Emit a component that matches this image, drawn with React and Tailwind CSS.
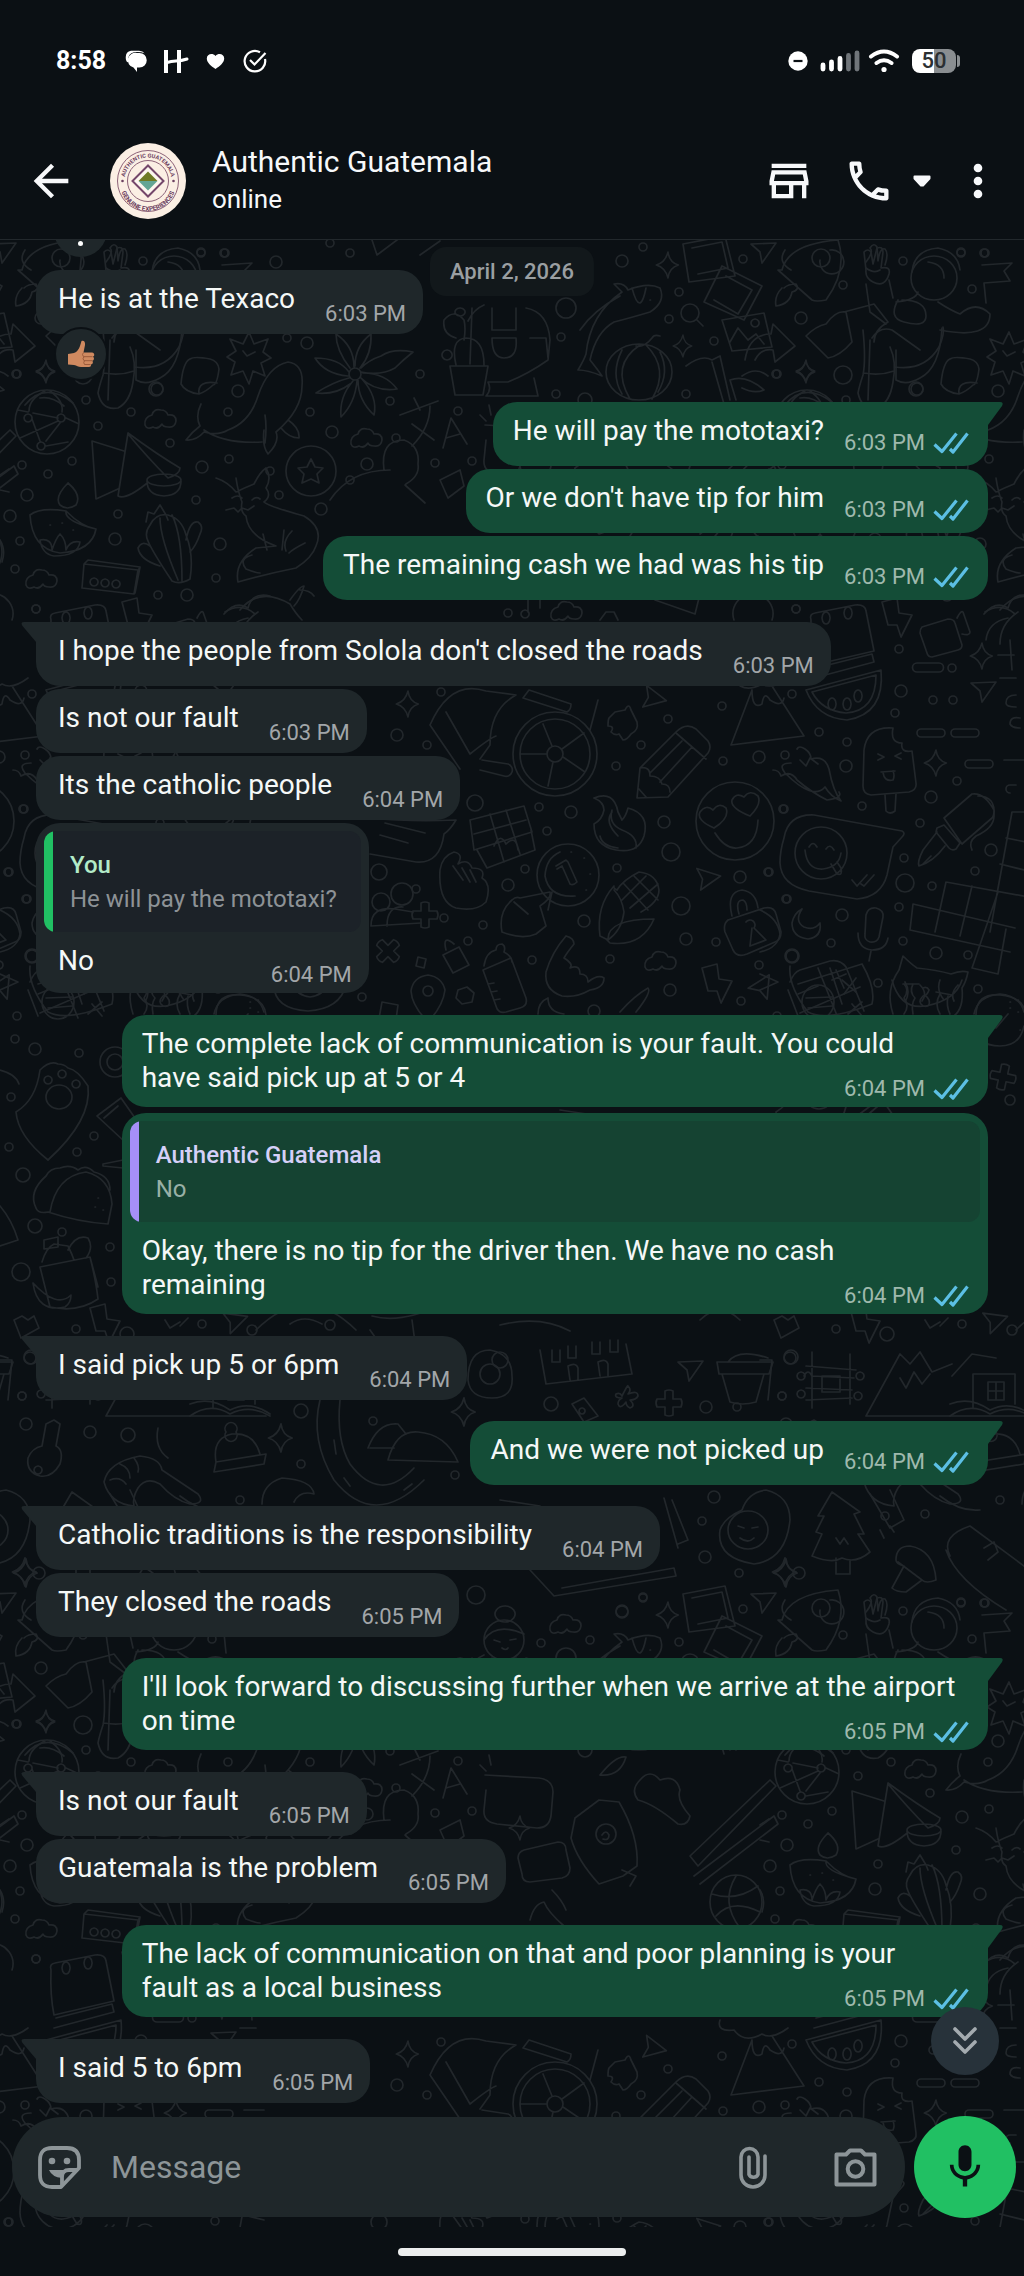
import React from "react";
import {
  MdArrowBack,
  MdOutlineStore,
  MdOutlineLocalPhone,
  MdMoreVert,
  MdMic,
} from "react-icons/md";

/* ---------- wallpaper ---------- */

const BUBBLES = [
  [201, 253, 4], [225, 253, 4], [276, 262, 6], [350, 253, 4], [143, 261, 4], [330, 243, 4],
  [17, 374, 4], [157, 389, 6], [238, 391, 6], [86, 400, 4], [131, 412, 4], [98, 426, 4],
  [228, 412, 4], [310, 412, 4], [332, 432, 6], [287, 338, 4], [307, 343, 6], [420, 374, 4],
  [390, 401, 4], [458, 411, 4], [396, 438, 4], [170, 443, 4], [72, 461, 4], [22, 465, 4],
  [48, 474, 4], [202, 467, 6], [229, 459, 4], [270, 471, 4], [367, 464, 6], [435, 463, 4],
  [472, 461, 4], [350, 480, 4], [27, 495, 6], [279, 495, 4], [196, 500, 4], [321, 509, 6],
  [118, 514, 4], [10, 516, 6], [115, 539, 6], [20, 541, 4], [220, 544, 6], [15, 569, 4],
  [216, 578, 4], [158, 595, 4], [187, 595, 6], [36, 609, 4], [622, 261, 6], [643, 247, 4],
  [679, 292, 4], [566, 308, 10], [669, 319, 4], [561, 337, 4], [714, 341, 4], [743, 259, 4],
  [801, 318, 6], [843, 285, 4], [556, 394, 4], [585, 400, 7], [686, 394, 4], [776, 374, 4],
  [843, 375, 9], [916, 389, 7], [961, 252, 4], [984, 253, 4], [972, 289, 4], [508, 613, 4],
  [796, 609, 4], [899, 649, 4], [952, 668, 4], [901, 691, 6], [933, 700, 4], [953, 700, 4],
  [792, 694, 4], [722, 706, 4], [895, 713, 4], [668, 719, 4], [819, 732, 4], [847, 742, 4],
  [397, 735, 6], [427, 745, 4], [641, 745, 4], [616, 766, 4], [723, 761, 4], [759, 757, 6],
  [785, 755, 4], [846, 766, 6], [441, 692, 4], [957, 781, 4], [931, 797, 6], [920, 823, 4],
  [539, 807, 4], [571, 812, 6], [664, 822, 6], [547, 831, 4], [783, 809, 4], [862, 806, 4],
  [475, 803, 8], [671, 852, 9], [617, 868, 4], [525, 869, 4], [508, 885, 6], [740, 877, 6],
  [768, 872, 4], [904, 858, 4], [905, 883, 9], [932, 886, 4], [975, 871, 4], [991, 850, 6],
  [584, 921, 6], [681, 906, 9], [786, 899, 4], [842, 915, 6], [899, 907, 4], [686, 939, 6],
  [716, 942, 4], [831, 943, 4], [903, 941, 4], [936, 953, 6], [968, 955, 4], [610, 959, 4],
  [532, 960, 4], [792, 956, 6], [759, 965, 4], [670, 990, 6], [741, 1001, 4], [594, 1011, 6],
  [878, 983, 4], [978, 989, 4], [379, 872, 8], [416, 889, 4], [444, 918, 4], [468, 941, 4],
  [483, 925, 4], [362, 997, 4], [24, 809, 4], [9, 872, 4], [27, 899, 4], [32, 956, 7],
  [17, 1016, 4], [15, 1039, 4], [35, 1049, 6], [79, 1053, 4], [11, 1097, 4], [94, 1136, 4],
  [9, 1147, 4], [77, 1152, 4], [23, 1175, 7], [35, 1226, 7], [62, 1232, 4], [110, 1247, 4],
  [21, 1272, 9], [111, 1282, 4], [76, 1329, 4], [202, 1324, 4], [127, 1334, 7], [30, 1358, 6],
  [22, 1396, 4], [301, 1411, 7], [90, 1432, 6], [128, 1435, 7], [26, 1424, 6], [301, 1464, 4],
  [240, 1500, 4], [373, 1421, 4], [455, 1475, 4], [551, 1404, 7], [706, 1407, 6], [737, 1407, 4],
  [782, 1396, 4], [791, 1357, 7], [714, 1497, 6], [702, 1521, 4], [705, 1557, 6], [739, 1573, 4],
  [799, 1573, 6], [885, 1516, 4], [925, 1514, 4], [476, 1595, 9], [622, 1612, 6], [643, 1598, 4],
  [590, 1640, 4], [541, 1643, 4], [500, 1360, 8], [1010, 1100, 5], [1012, 1330, 5], [330, 1325, 5],
];

const SPARKLES = [
  [668, 265, 13], [46, 371, 11], [683, 346, 11], [806, 372, 11], [982, 656, 13], [408, 704, 13],
  [936, 763, 13], [281, 1438, 14], [464, 1412, 14], [785, 1572, 14], [26, 1573, 14],
  [520, 478, 12],
];

const CLOUDS = [[161, 420], [367, 439], [42, 580], [661, 962], [567, 612], [566, 1625]];
const CURSORS = [[763, 253, 0], [650, 700, 40], [705, 881, 20], [763, 990, -30], [983, 692, 0], [690, 1371, 0], [233, 1324, 10]];
const BOLTS = [[897, 617], [717, 983], [105, 1323]];
const PLUSES = [[425, 915, 0], [388, 951, 45], [1003, 1077, 12], [669, 1403, 0]];

const DOODLES = [
  // globe
  "M15 422a32 32 0 1 0 64 0a32 32 0 1 0-64 0M28 414a4 4 0 1 0 .1 0M61 414a4 4 0 1 0 .1 0M41 442a4 4 0 1 0 .1 0M18 410l10 2M33 413l25 5M20 438l38-17M32 419l8 22M46 441l14-18M45 391q-16 8-16 20M50 391q14 10 12 21M66 418l13 6M46 446l22-4",
  // whale
  "M201 404q-6 12-1 22q-8 6-14 14q10 1 18-8q14 4 24-2q22-8 30-34q10-30 30-34q16 2 14 24q0 24-26 46q4 10-8 22q-6-8-4-24M204 430q20 14 58 12M265 415q2 12 0 28M288 420q12 8 11 18q-10 0-18-10",
  // flower
  "M349 374a6 6 0 1 0 12 0a6 6 0 1 0-12 0M350 368q-14-18-14-34q18 12 18 33M360 368q12-14 11-34q-16 12-16 32M361 372q20 4 34-4q8-8 18-16q-20-4-32 4q-12 4-20 12M361 378q14 14 36 11q-12-16-34-16M358 380q0 20 16 35q4-18-12-36M353 381q-14 16-12 36q14-14 16-36M349 378q-16 4-33 15q20 2 34-9M349 372q-10-14-34-14q10 16 33 18",
  // starburst
  "M249 332l5 12l14-5l-5 13l8 6l-10 5l4 13l-12-5l-4 13l-6-13l-12 4l4-13l-8-5l9-6l-6-12l13 5zM243 351l4 5l8-4",
  // sock and jug
  "M103 330q3 30 0 45q-4 12-5 18q4 18 20 15q12-6 15-26q4-20-3-35M104 373q16 3 30-2M135 367q30 4 44-20q6-14 4-20",
  // sticker
  "M190 359q4-3 20 0q8 2 9 10q-2 16-6 16q-6 6-14 9q-14-2-18-10q2-22 9-25M199 394q-2-14 18-11",
  // astronaut above
  "M25 250q-8 12 6 20M60 260a12 12 0 1 0 10-10M106 262q8-10 4-14q4-6 7-1l1 14q2-14 7-12q4 4 0 16M120 270q-6 4-14-2",
  "M152 272q2-22 26-24q20 4 22 22M372 240l5 15l24-18M420 255l20-14",
  // folded napkin with bowl
  "M92 441l32 10M92 441l4 58l22-10M128 433l-10 63q8 4 28-12M128 433q30 22 52 35q0 6-12 10q-20-20-40-44M147 480a17 6 0 1 0 34 0a17 6 0 1 0-34 0M147 481q0 14 17 15q17-1 17-15",
  // oil lamp
  "M68 483q-14 14-8 22q7 6 16 0q6-10-8-22M30 515q10-8 36-4q16 16 30 18q-4 22-36 24q-28-4-30-38M66 511q-2 10 30 18M40 540q12-2 12 10q4-12 8-16q6 6 6 16q4-10 14-8q-2 14-26 14q-12-2-14-16M50 525h.5M62 523h.5M73 530h.5",
  // cactus
  "M150 525q6-12 18-10q14 4 18 20q8 20 4 44q-10 6-18 2q-20-30-24-40q-4-8 2-16M160 518q0 20 18 62M172 515q10 20 10 66M146 522l2-10l6 2l6-9l6 10l2 5M186 540q4-20 12-18q6 4 2 12q-4 12-10 18M160 566q-20-6-22-18q4-8 12-2",
  // fox
  "M216 478q12 4 20 14q8-4 18-8q6-12 12-16q6 10 0 20q6 8-2 14q4 4 40 14q20 12 12 30q-4 12-20 22q-30 6-58 14q-4-20 18-34l20-2q-28-10-30-30q-6-4-4-14q-4-10-6-24M232 498q6-4 10 0M252 500q4-4 8-1M226 510l8-2l4 4l4-4l6 2l6-4M263 534l4 16M284 530l-2 20M292 531q-10 10-6 20M305 543q-12 6-16 10M252 555q-14 4-6 14q10 4 14 4",
  // star badge
  "M286 471a25 25 0 1 0 50 0a25 25 0 1 0-50 0M311 459l4 8l8 1l-6 6l2 9l-8-4l-9 4l2-9l-6-6l9-1z",
  // box with three dots
  "M84 564l54 6l-4 24l-52-6zM84 564l4-4l52 7l-2 4M140 567l-5 26M94 578a4 4 0 1 0 .1 0M105 579a4 4 0 1 0 .1 0M116 580a4 4 0 1 0 .1 0",
  // translate
  "M400 415l38-14M414 398l6 12M430 406q0 22-18 40M412 424l22 16M443 448l8-30l16 26M446 438l14-4",
  // calendar
  "M51 620q-2-6 4-7l40-8q10-1 11 6l8 40l-60 14q-4-20-3-45M66 612a4 6 0 1 0 .1 0M88 607a4 6 0 1 0 .1 0M56 668l56-14l2 8l-60 16",
  // gardener with potted cactus
  "M450 366h38l-5 29h-28zM456 365q-6-26 10-27q18 0 18 27M456 338q-14-4-12-18q10-12 20 0q2 8 0 20M460 308a5 4 0 1 0 .1 0M447 350a5 5 0 1 0 .1 0M484 305q-10 4-16 16M472 308l-2 56M492 308v22h24v-22M492 338h24q2 20-12 20q-12 0-12-20M526 308q22 4 24 32l-2 20q-20 14-40 22l-20 0q4 8-2 14h52l-4-18M530 338h16l2 20",
  // koi
  "M614 284q10-2 14 6q20-8 32-2q6 14-10 24q-20 6-36 10q-18 10-24 38q8 10 12 16q-14-6-24-6q6-10 8-16q4-40 36-62zM632 288q8 30 14 0M580 330q14-20 40-34M650 300h.5",
  // pumpkin
  "M606 372a33 28 0 1 0 66 0a33 28 0 1 0-66 0M640 345q-30 20-10 54M646 345q24 24 6 54M622 350q-12 24 0 44M660 352q10 20-2 40M636 346q8 2 16-8q2-4 8-2",
  // photo frames
  "M683 244l42-8l10 40l-46 6zM692 248l30-6l6 26l-30 6M722 266l40 20l-18 34l-40-18zM726 276l26 14l-14 24l-24-14",
  "M722 320l42-7l8 34l-40 4zM730 342l8-14l10 12l8-6l8 10M755 319a4 4 0 1 0 .1 0M745 360q4-26 26-26l2-10l22 22l-20 16l-2-12q-12-2-18 10",
  "M681 313a9 9 0 1 0 18 0a9 9 0 1 0-18 0M697 320l6 6",
  // rocket
  "M782 270q6-26 56-30q10 30-12 60q-10 2-14 0l-34-30zM812 258a9 9 0 1 0 18 0a9 9 0 1 0-18 0M782 288q-8 8-6 18q14-2 16-14q8-2 4-8q-8 0-12 4",
  // astronaut
  "M911 278a23 22 0 1 0 46 0a23 22 0 1 0-46 0M928 262q16 2 16 16M866 270l-2-18q4-4 7 0l2 12l4-16q6-2 6 4l-2 16q10-2 8 6q-4 14-16 8q-8-4-7-12M866 284l4 28l16 12M889 280l4 18M844 312l30-8l14 18q-14 8-14 20M806 336q10-10 20-12q10-14 20-12l6 30q-12 14-24 16zM872 338q8-12 20-8l28 20M870 340l-2 60M896 350v30q10 6 24-2q20-10 22-50M896 302q20-2 22-10M898 300q-10 18 6 22q22 6 22-6q0-16-24-16M940 330q50 10 50-16q-14-14-30 0q-10-4-22-12",
  "M982 265l30-2l-8 8l6 10l-26 2M984 283l2 20",
  // bamboo
  "M686 366q16-12 26-6l8-4l10 44M712 362l12 42M736 400l-6-20q16-6 34 10q-10 4-22-2M742 376q14-10 26 0",
  // ball
  "M785 405q20-24 48-2M800 398q12-2 24 8",
  // camcorder
  "M922 627l26-8q6 0 7 4l7 22q0 4-4 5l-26 7q-4 0-5-4l-7-20q0-4 2-6zM957 618q4-8 6-6l7 20q0 4-8 2",
  // palm tree
  "M984 614q12-14 24-6q4-16 22-12M986 640q2-18 22-22M1000 644q0-20 18-32M1010 640l2 30M998 655h16M1000 678h16",
  // watermelon
  "M806 690l75-20q4 44-34 50q-30-2-41-30M812 692l64-17q0 36-30 38q-24-2-34-21M832 698a4 6 0 1 0 .1 0M847 698a4 6 0 1 0 .1 0M858 690a4 6 0 1 0 .1 0",
  // volcano
  "M752 690l-21 55l73-9l-32-50M752 690q0 20 10 14q2-14 8-4q12 8 14-2M720 670q-4 12 14 10q10 14 28 4q10 6 26-6",
  // popsicle
  "M893 728q-26-2-29 22l-1 36q0 8 8 9l38-3q8-2 7-9l-4-32q-12 2-10-8q-12 0-9-15M878 754l6 3l-6 3M901 753l-6 3l6 3M881 772l14-1M883 772q1 10 10 8q2-4 0-9M885 795l1 16q4 4 9 0l1-17",
  // pills
  "M921 729h20a4 4 0 1 1 0 8h-20a4 4 0 1 1 0-8M955 729h20a4 4 0 1 1 0 8h-20a4 4 0 1 1 0-8M969 760h20a4 4 0 1 1 0 8h-20a4 4 0 1 1 0-8M1004 760h20M917 663h22a4 4 0 1 1 0 9h-22a4 4 0 1 1 0-9M1016 785h-6a4 4 0 1 0 0 8M1016 695q-10 0-10 8q0 4 10 4M1020 718q-10-2-10 6q2 4 10 4",
  // wheelchair wheel
  "M513 754a42 42 0 1 0 84 0a42 42 0 1 0-84 0M520 754a35 35 0 1 0 70 0a35 35 0 1 0-70 0M547 754a8 8 0 1 0 16 0a8 8 0 1 0-16 0M552 746l-9-22M562 749l22-16M563 757l22 15M553 762l-5 24M547 754h-26M523 698l44 14q4-2 4-8l-42-14zM590 730l8-30M430 725q20-46 56-34l30 4q-26 14-26 50l-10 14M430 725l30 44M446 712l24 42q20-16 26-18M480 770l24 6a6 6 0 1 0 4-12l-26-4",
  // puzzle
  "M609 718q4-4 6-6l10-2q4-8 6 0l6 12q2 8-6 12q-4 6-8 6l-4-6q-4 2-8-2q4-6-3-6q0-6 1-8",
  // pencil
  "M637 798l3-30l36-36q10-10 20-3l12 12q4 6 0 12l-40 44zM640 768q10-2 10 8q10 0 12 8q8 0 8 8M676 733l30 26M682 741l-32 32M692 747l-32 35M638 788l8 9",
  // chilli peppers
  "M797 749q2-4 8 0q6 4 6 10q14-4 18 10q4 22 12 32q-10-4-16-14q-12 14-40-14q-8-10 6-10M773 770q6 0 8 6M781 776q10-6 16 4q14 12 30 20q16-2 12-8M800 760l6 6l4-8l8 6",
  // heart eyes face
  "M696 821a39 39 0 1 0 78 0a39 39 0 1 0-78 0M715 833q10 16 22 15q20-2 21-28M714 828q-18-8-14-16q6-8 13-2q6-8 13-2q4 10-12 20M750 816q-20-8-18-16q4-8 12-3q6-8 14-1q4 8-8 20",
  // chat bubble with smiley
  "M784 838q4-24 30-23l88 16q4 2 0 6l-9 10l-6 28q-6 22-30 24l-48-8q-28-6-29-28q0-12 4-25M795 853a26 26 0 1 0 52 0a26 26 0 1 0-52 0M805 850q2 20 18 19q16-2 18-16M809 847q4-7 8 0M826 849q4-6 8 1M831 864l6 10q6 2 4-6l-4-6M852 880l5 6l10-11M861 884l3 2l10-11",
  // fountain pen
  "M944 818l28-24q12-2 22 16q0 6-2 8l-30 26zM937 828l7-3l16 18l-4 6q-4 2-7-1l-13-16zM937 832l-14 18q-6 12-4 16q14-4 26-20M923 864l8-8M978 796q18 0 16 20q0 12-18 20q-8 6-4 14",
  // crossword
  "M913 904l102 24M913 904l-3 26l100 22M946 882l110 20M946 882l-11 50M972 886l-12 50M998 892l-26 76l26 6l8-45M1012 812l-22 120M1012 812h12M1006 838l20 4M1000 864l24 6",
  // fire
  "M594 798q20-8 24 14l4 8q4-4 6-12q22 6 16 28q-6 18-28 14q-22-4-22-26q8-4 10-14q0-8-10-12M612 810q-4 14 10 20q16 6 14 18M612 812q-8 10 6 24M600 836q2 10 18 12",
  // coin
  "M537 875a31 31 0 1 0 62 0a31 31 0 1 0-62 0M560 852q-14 6-15 24q4 22 30 20M556 866l10-6l2 2l9 20q-4 4-7 2l-8-18l-5 3M571 852h.5M584 858h.5M590 874h.5M586 890h.5",
  // corn
  "M617 890q6-10 22-18q18 2 20 18q0 12-18 22M617 890q-4-2-3-4q-18 20-14 50q4 2 8 4q14-10 16-28q-2-14-10-22M608 939q0-20 46-20q-12 28-44 24l-4-4zM624 884l24 26M634 876l24 24M622 900l24-24M630 908l28-24",
  // lock
  "M728 920l36-12q10-2 12 6l5 18q0 8-6 10l-28 12q-10 4-14-4l-8-18q-2-8 3-12M732 916q-6-24 10-26q14 2 16 18M739 914q-4-14 4-14q4 2 4 10M746 922a5 5 0 1 1 8 6l12 12l-16 6l2-18",
  // moon
  "M802 909q-8 12 2 18q10 4 16-4q2 14-12 16q-16-2-16-16q2-10 10-14",
  "M548 998q-10 4-10 16M548 998q0 14 16 16",
  // microphone
  "M866 915q2-8 10-7q8 2 7 9l-4 20q-2 6-9 5q-6-2-5-8zM858 933q0 16 14 17q14 0 16-12M871 951l-2 10",
  // calculator
  "M790 982q4-10 10-12l30-9q10-2 16 6l18 44M788 990l10 26M818 968l20 50M800 1013l60-26M798 994l20-8M832 980l14-6M836 970l8 18M852 1004l10 12M862 1002l-14 12",
  // crying cat
  "M899 970l4-14q8 8 14 12q20 2 34 6q10-4 17-2q-2 10-6 16q2 20-8 28M899 970q-14 20-6 44M903 984h16M904 984q6 6 0 14q6 8 0 16M913 984q-4 8 2 14q-4 6-2 16M936 992l16 3M940 994q-6 10 0 20M948 996q-2 10 2 18M923 988q4-2 6 2q-2 6-6 6q-6 6 0 10q8 2 6-6q-2-4-4-4",
  // clock
  "M974 1014q4-18 26-20q20 2 24 18M980 1040q8 6 20 6q20 0 24-20M1008 1014l-12 14M1010 1002h.5M1018 1012h.5M1020 1030h.5",
  // hands
  "M440 870q2-14 14-18q10 2 4 12q10-6 14 4q14 0 10 10q10 6 4 24q-10 10-30 6q-18-6-16-38M453 866l10 14M462 868l8 14M470 870l6 12M512 900q4-4 8-2l30-6q2 6-10 14l6 20l-10 8q-14 6-34-2q-4-20 10-32M514 902l14 12M552 892l-4 18",
  "M566 936q8 2 8 8q-8 10-10 14q10 6 6 10q10-4 10 6q8 0 8 8q10-8 16-4q0 10-14 12q-14 8-28 6q-18-6-16-24q6-20 20-36M620 1012q14-16 28-24q4 4-12 24",
  // baby bottle
  "M483 970l28-12l15 40q2 8-6 10l-14 4q-8 2-10-6zM484 966q2-14 12-16q0-6 6-6q4 2 2 8q8 4 8 10M488 984l6-1M491 992l6-1M494 1000l6-1",
  // gift
  "M470 820l54-14l8 26l-58 18zM477 850l10 18l48-18l-4-20M490 814l14 48M506 810l14 44M474 834l52-14M494 846q6-14 12-2q10-10 12 6",
  // location
  "M411 991q2-14 17-16q14 2 17 15q-2 16-17 32q-16-16-17-31M423 991a5 5 0 1 0 10 0a5 5 0 1 0-10 0",
  // padlock and cube
  "M443 955l16-8l10 18l-16 8zM446 950q-4-16 8-6M418 957l8 2l-2 9l-8-2zM458 990l9-3l7 6l-2 9l-10 2l-6-6zM382 1002l16 3l-3 22M382 1002l-4 22",
  // people
  "M372 902a9 9 0 1 0 18 0a9 9 0 1 0-18 0M391 894a11 11 0 1 0 22 0a11 11 0 1 0-22 0M371 926q0-20 24-17l18 3M387 926q0-20 16-19M371 926l50-3",
  // chat bubble
  "M370 818q40 4 86 2q-6 10-12 14q-4 30-28 28l-46-8M385 823l40 10M380 835l28 8",
  // tablets and pill
  "M30 966q-2 20 18 46q18 10 64-8q4-16-10-40M38 984l64-20M70 968l12 36M42 1002a16 17 0 1 0 32 0a16 17 0 1 0-32 0M46 998l26-1M48 1008l24-2M82 980l14 12M96 978l-12 16",
  // donut and bowl
  "M132 980q8 30 34 26q30-6 36-26M145 982q6 10 0 20M160 985q8 8 2 16M180 980q-4 10 4 20M198 985q-8 8-4 16M216 1015q0-22 24-20q24 2 26 20M274 985q0 24 34 26q32-2 38-26M294 985q2 10 16 12q14-2 16-12M250 1008h.5M258 1000h.5",
  // shield with paw
  "M40 1070q10-10 18-6q6 0 10 4q10 2 20 18q4 34-40 74q-30-24-32-48q20-12 24-42M46 1097a13 12 0 1 0 26 0a13 12 0 1 0-26 0M48 1076a4 4 0 1 0 .1 0M62 1070a4 4 0 1 0 .1 0M76 1080a4 4 0 1 0 .1 0",
  // ring and kite
  "M100 1062a15 15 0 1 0 30 0a15 15 0 1 0-30 0M107 1062a8 8 0 1 0 16 0a8 8 0 1 0-16 0M97 1116l24-18l14 20M97 1116l28 26M104 1118l14-12M103 1164l20-4v8l-20-2z",
  // taco
  "M50 1212q6-36 36-40q24 6 26 32l-4 20q-30-2-60-12zM36 1208q-8-16 10-32q4-8 14-8q10-4 18 2q8-6 16 2q16 4 16 18M36 1208q2 6 12 4M95 1207h.5M103 1210h.5M98 1198h.5",
  // bread bag
  "M40 1267l50-10q6 24 8 42q-20 14-48 8zM42 1262q4-14 12-18l14 2q4 8 6 14M44 1240l14-3v10l-14 2zM68 1250q8-16 20-12q6 10-2 20M33 1283q4 30 32 24q6-4 6-12q-14 14-38-12M90 1257l8 30",
  // scattered objects on the left edge
  "M14 1320l8-4l6 4l6-4l5 12l-18 10zM0 1070q16 4 19 14M0 910q18 8 20 24q-2 14-20 18M0 1206q12 14 18 34l-18 6M0 990l18-8l-18-8M0 1360h12l-4 40M0 475l9-6M0 490l9 2M0 540q6 10 2 22",
  // plate and small items behind replies
  "M256 1330q50-50 100 0M290 1324q14-10 32 0M370 1330l10 14l-8 20M412 1320l4 30M372 1316q30 8 70-12M165 1320l5 8l10-6M180 1326l8-8",
  // mountain and house
  "M866 1416h160M866 1416l34-62l10 10l10-12l12 20l20-8M900 1378l6 10l8-16l8 12l8-10M952 1376l20-22l24 4M973 1374h42v30M973 1374v34M988 1382h16v18h-16zM996 1382v18M988 1391h16M950 1404q20-8 40 6q20-10 40 4",
  // log cabin
  "M806 1366l50 4M804 1376q4-8 8 0l42 2M806 1388l46 2M806 1400l46-2M812 1352v56M850 1354v50M822 1376h18v16h-18zM801 1372a4 4 0 1 0 .1 0M801 1390a4 4 0 1 0 .1 0M860 1372a4 4 0 1 0 .1 0M858 1392a4 4 0 1 0 .1 0",
  // flower pot
  "M717 1362h56l-4 12h-50zM722 1374l8 28q12 4 26 0l8-28M728 1362q10-14 40-4",
  // building
  "M540 1350l6 34l86-10l-6-30M552 1350v12h8v-12M568 1346v12h8v-12M592 1342v12h8v-12M610 1340v12h8v-12M570 1380l-2-14q8-4 10 2v12M600 1376l-2-14q8-4 10 2v12",
  // asterisk flower
  "M622 1396q6-12 6-10q4 4 0 8q10-4 10 2q-2 4-8 4q6 6 0 8q-4-2-4-6q-6 8-8 2q0-4 4-6q-8 0-6-4q4-2 6 2M572 1404l12-6l14 18l-14 6zM582 1408a3 3 0 1 0 .1 0",
  // egg
  "M468 1380q0-30 22-30q22 4 22 26q2 22-20 22q-22 0-24-18M480 1374a10 10 0 1 0 20 0a10 10 0 1 0-20 0",
  // avocado
  "M742 1510q6-18 24-20q24 6 24 30q-4 40-36 44q-38-6-34-34q4-12 22-20M728 1530a20 19 0 1 0 40 0a20 19 0 1 0-40 0M738 1526l6 2M752 1528l6-1M740 1538q8 6 14 0",
  // pine
  "M832 1492l-14 24h6l-8 16l6 2l-10 22q20 8 30 2q14 6 28-6l-12-18h6l-10-20l6-2zM836 1558v16h14v-14M836 1538l4 6l4-6l4 6",
  // mushroom
  "M896 1560q0-14 14-14q24 4 26 34q-10 4-14 0l-16 12q-10 0-14-4l12-22q-8-2-8-6M898 1562l24 18",
  // scarf and tools
  "M870 1494l20 34l14-8l-14-30M880 1530l4 8M890 1526l4 6M950 1556q-10-20 20-30l54 40M984 1548l10-6l4 10l-10 8M946 1550q10 30 60 60",
  // key
  "M46 1424l8-4l6 4l-4 22q8 4 4 18q-8 14-20 12q-14-4-12-18q4-10 14-12zM38 1466a4 4 0 1 0 .1 0",
  // shrimp
  "M104 1482q4-20 36-26q20 2 22 14l36 24q8 10-8 10q-16-4-30-20q-14-8-22 4q-6 10-4 18q-24-2-30-24M120 1464q10 4 10 14M134 1458q6 8 4 14M110 1480q10-4 16 4M158 1428q-4 20 10 30",
  // winter hat
  "M214 1472l50-8l2-10l-50 8zM216 1462q-4-24 16-28q22-2 28 20M226 1432a6 6 0 1 0 10 0a6 6 0 1 0-10 0",
  // mountain base
  "M190 1416q20-14 40-2q20-10 40 2",
  // record with mushrooms
  "M320 1400q-10 40 14 80q40 50 90 0M340 1400q-4 40 10 64q30 40 64 4M368 1448q10-26 30-24l8 10M388 1460q8-30 30-28q28 2 40 30zM370 1448h24M334 1440l2 14M344 1478l6 8M404 1490l8-6",
  // waves
  "M180 1496q20 16 40 14M262 1504q0-20 20-26q30 2 32 16q-14-4-20 8",
  // tray and laptop
  "M530 1570l24 26l122-20l-2-8l-112 20M500 1500l40 6M672 1500l16 40l-10 4M664 1498l14 50",
  // person with scarf
  "M484 1640a20 20 0 1 0 40 0a20 20 0 1 0-40 0M505 1606a10 8 0 1 0 .1 0M484 1640q12-18 40-6M494 1640l6 2M510 1640l6-1M502 1648q4 3 6 0",
  // alarm clock
  "M485 425l54 3q14 2 14 14l-2 24q-2 12-14 12l-40-4q-14-2-13-14l2-20M480 415l6 6M489 405l2 10",
  // password tablet
  "M524 500l34-8q8 0 8 8l4 18q0 8-8 10l-32 4q-8 0-8-8l-4-16q0-6 6-8",
  // lotion bottle
  "M575 468l24-18l20 2q20 34 18 64l-14 10l-24 8q-22-24-28-46zM596 484a10 10 0 1 0 20 0a10 10 0 1 0-20 0M602 485q4-6 7 0q0 6-6 4M622 520l14 6l-6 10",
  // peanuts
  "M640 430q10-12 20 0q16-6 20 10q-4 10 10 26q-2 10-12 8q-24-20-40-24q-8-10 2-20",
  // chopsticks
  "M690 506l80-76l6 6l-78 80zM694 526l80-60l4 8l-78 60M600 425q16-20 26-18q-6 20-26 18",
  // basketball
  "M710 552a26 27 0 1 0 52 0a26 27 0 1 0-52 0M736 526q-16 26 4 52M712 544q24 8 46-8M716 566q16-18 44-4",
  // carrots
  "M530 570q4-16 14-18q4 10 20 24M552 540q10 10 14 20",
  // notes and lanterns behind the middle rows
  "M525 610a4 4 0 1 0 .1 0M528 612v-14l12-2v12M655 600l40 14l4-16M734 620a20 20 0 1 1 38 0M600 620l6-8l8 0l4 8M690 640q10-20 30-4",
  "M240 610q20-24 50-6q6 10 12 16M225 612q16-10 30 2M290 600q10-14 14-14q-4 14-10 20M300 590q10 0 14 6",
  "M330 500q20-30 60-30M384 470q-4-30 20-30q16 6 14 24q2 12-12 20M405 485l20 18M440 480l20-10l4 16l-16 12z",
  // fish bones and flags behind wide bubbles
  "M620 1060l30 14l-10 20l-30-12zM700 1320q20-20 40 0M500 1325q40-10 70 6M560 1110l40 6",
];

function Wallpaper() {
  const tiles = [
    [-760, 0], [0, 0], [760, 0], [-760, 1350], [0, 1350], [760, 1350],
  ];
  return (
    <svg
      aria-hidden="true"
      className="absolute inset-0 h-full w-full"
      fill="none"
      stroke="#22272b"
      strokeWidth="1.7"
      strokeLinecap="round"
      strokeLinejoin="round"
    >
      <defs>
        <g id="doodle-tile">
          {BUBBLES.map(([x, y, r], i) => (
            <circle key={i} cx={x} cy={y} r={r} />
          ))}
          {SPARKLES.map(([x, y, s], i) => (
            <path
              key={i}
              transform={`translate(${x} ${y}) scale(${s / 10})`}
              strokeWidth="1.300"
              d="M0-10Q1-2 8 0Q1 2 0 10Q-2 2-9 0Q-2-2 0-10z"
            />
          ))}
          {CLOUDS.map(([x, y], i) => (
            <path
              key={i}
              transform={`translate(${x} ${y})`}
              d="M-9-5q2-7 9-5q5 0 7 5q8-1 8 6q-1 7-8 6q-5 0-6-3q-4 6-9 3q-6 3-8-2q-1-8 7-10"
            />
          ))}
          {CURSORS.map(([x, y, a], i) => (
            <path
              key={i}
              transform={`translate(${x} ${y}) rotate(${a})`}
              d="M-12-9l25-1l-14 20l-2-11z"
            />
          ))}
          {BOLTS.map(([x, y], i) => (
            <path
              key={i}
              transform={`translate(${x} ${y})`}
              d="M-15-15l15-4l2 15l13 2l-11 22l-4-12l-9 0z"
            />
          ))}
          {PLUSES.map(([x, y, a], i) => (
            <path
              key={i}
              transform={`translate(${x} ${y}) rotate(${a})`}
              d="M-4-12q4-2 8 0v8h8q2 4 0 8h-8v8q-4 2-8 0v-8h-8q-2-4 0-8h8z"
            />
          ))}
          {DOODLES.map((d, i) => (
            <path key={i} d={d} />
          ))}
        </g>
      </defs>
      <g transform="translate(0 -240)">
        {tiles.map(([x, y], i) => (
          <use key={i} href="#doodle-tile" x={x} y={y} />
        ))}
      </g>
    </svg>
  );
}

/* ---------- status bar ---------- */

function StatusBar() {
  return (
    <div className="flex items-center justify-between pt-[49px] pr-16 pl-14 text-white">
      <div className="flex h-6 items-center">
        <span className="w-[53px] text-[25px] leading-6 font-bold">8:58</span>
        <svg className="ml-4 h-[22px] w-[22px]" viewBox="0 0 22 22" fill="#fff" aria-hidden="true">
          <path d="M1 10Q-.5 2 6 .8h8q4 .4 5.500 2.400Q16 1.800 12 2 5 2 3.500 7 3 9 3.300 12.500 1.500 12 1 10z" />
          <path d="M12 3h2.500a7.200 7.200 0 0 1 0 14.500H12V22L8.500 17.500A7.400 7.400 0 0 1 12 3z" />
        </svg>
        <svg className="ml-4 h-6 w-[27px]" viewBox="0 0 27 24" fill="none" stroke="#fff" strokeWidth="4" aria-hidden="true">
          <path d="M3 1v23M16 1v23" />
          <path d="M4 13.500c8-3 10 0 20-3.500" strokeWidth="3" strokeLinecap="round" />
        </svg>
        <svg className="ml-4 h-[17px] w-[19px]" viewBox="0 0 19 17" fill="#fff" aria-hidden="true">
          <path d="M9.500 16C5 13 .8 9.500.8 5.500.8 1 6.500-.5 9.500 3c3-3.500 8.700-2 8.700 2.500 0 4-4.200 7.500-8.700 10.500z" />
        </svg>
        <svg className="ml-[18px] h-6 w-6" viewBox="0 0 24 24" fill="none" stroke="#fff" strokeWidth="2.200" aria-hidden="true">
          <path d="M17 3.200A10.300 10.300 0 1 0 22 10" />
          <path d="M7 11l4.500 4.500L22.500 4" />
        </svg>
      </div>
      <div className="flex h-6 items-center">
        <svg className="h-5 w-5" viewBox="0 0 20 20" aria-hidden="true">
          <circle cx="10" cy="10" r="9.700" fill="#fff" />
          <path d="M5.500 10h9" stroke="#0b1014" strokeWidth="2.200" />
        </svg>
        <svg className="ml-3 h-6 w-10" viewBox="0 0 40 24" strokeWidth="4.800" strokeLinecap="round" aria-hidden="true">
          <path d="M3 16v4M11.500 13v7M20 9.500V20" stroke="#fff" />
          <path d="M28.500 6.500V20M37 4v16" stroke="#70757a" />
        </svg>
        <svg className="ml-2 h-6 w-8" viewBox="0 0 32 24" fill="none" stroke="#fff" strokeWidth="4" strokeLinecap="round" aria-hidden="true">
          <path d="M3 7.500q13-10 26 0M8.500 14q7.500-5.500 15 0" />
          <circle cx="16" cy="20.500" r="2.600" fill="#fff" stroke="none" />
        </svg>
        <span className="ml-3 flex h-6 w-11 items-center justify-center rounded-lg bg-linear-to-r from-white from-50% to-[#8a8e91] to-50% text-[22px] leading-6 font-medium text-[#2b2f32]">
          50
        </span>
        <span className="ml-px h-3 w-[3px] rounded-r bg-[#8a8e91]" />
      </div>
    </div>
  );
}

/* ---------- header ---------- */

function Avatar() {
  return (
    <svg className="size-[76px] shrink-0" viewBox="0 0 76 76" role="img" aria-label="Authentic Guatemala logo">
      <defs>
        <path id="seal-top" d="M14.500 38a23.500 23.500 0 0 1 47 0" />
        <path id="seal-bottom" d="M10 40a28 28 0 0 0 56 0" />
      </defs>
      <circle cx="38" cy="38" r="38" fill="#fbefe4" />
      <circle cx="38" cy="38" r="30.500" fill="none" stroke="#8d6378" strokeWidth="1" />
      <circle cx="38" cy="38" r="20.500" fill="none" stroke="#8d6378" strokeWidth="1" />
      <g fontFamily="Roboto, sans-serif" fontWeight="700" fontSize="5.600" fill="#6b4060" textAnchor="middle">
        <text>
          <textPath href="#seal-top" startOffset="50%">AUTHENTIC GUATEMALA</textPath>
        </text>
        <text fontSize="6.400">
          <textPath href="#seal-bottom" startOffset="50%">GENUINE EXPERIENCES</textPath>
        </text>
      </g>
      <circle cx="12.500" cy="38" r="1.300" fill="#6b4060" />
      <circle cx="63.500" cy="38" r="1.300" fill="#6b4060" />
      <path d="M38 22.500L53.500 38 38 53.500 22.500 38z" fill="#fdf6ef" stroke="#74476a" strokeWidth="2" />
      <path d="M38 28.500l9.500 9.500h-19z" fill="#6f7a25" />
      <path d="M38 47.500l9.500-9.500h-19z" fill="#63a595" />
    </svg>
  );
}

function Header() {
  return (
    <header className="flex items-center border-b border-[#22282c] pt-[70px] pr-5 pb-5 pl-[25px] text-[#f7f8fa]">
      <button type="button" aria-label="Back" className="shrink-0">
        <MdArrowBack className="size-[52px]" />
      </button>
      <button type="button" className="ml-[33px] flex min-w-0 flex-1 items-center text-left">
        <Avatar />
        <span className="ml-[26px] flex min-w-0 flex-col">
          <span className="truncate text-[30px] leading-9">Authentic Guatemala</span>
          <span className="text-[26px] leading-[38px]">online</span>
        </span>
      </button>
      <button type="button" aria-label="Catalog" className="shrink-0">
        <MdOutlineStore className="size-[52px]" />
      </button>
      <button type="button" aria-label="Call" className="ml-7 flex shrink-0 items-center">
        <MdOutlineLocalPhone className="size-[52px]" />
        <svg className="ml-[18px] h-3 w-[18px]" viewBox="0 0 18 12" aria-hidden="true">
          <path d="M1.500 1.500h15v2L10 10.500H8L1.500 3.500z" fill="currentColor" stroke="currentColor" strokeLinejoin="round" strokeWidth="2" />
        </svg>
      </button>
      <button type="button" aria-label="More options" className="ml-[21px] shrink-0">
        <MdMoreVert className="size-[52px]" />
      </button>
    </header>
  );
}

/* ---------- messages ---------- */

function Ticks() {
  return (
    <svg className="ml-2 h-[22px] w-9" viewBox="0 0 36 22" fill="none" stroke="#5cbfe4" strokeWidth="3.200" role="img" aria-label="Read">
      <path d="M1.500 12.500l7.500 7L23.500 1.500" strokeLinejoin="round" />
      <path d="M17 17l3 3L34.500 1.500" strokeLinejoin="round" />
    </svg>
  );
}

function Tail({ sent }) {
  return sent ? (
    <svg className="absolute top-0 left-full h-6 w-4" viewBox="0 0 16 24" fill="#144d37" aria-hidden="true">
      <path d="M0 0h12q4 0 2 4L0 23z" />
    </svg>
  ) : (
    <svg className="absolute top-0 right-full h-6 w-4" viewBox="0 0 16 24" fill="#1f272a" aria-hidden="true">
      <path d="M16 0H4Q0 0 2.500 4L16 20z" />
    </svg>
  );
}

function Quote({ sent, name, text }) {
  return (
    <blockquote
      className={
        sent
          ? "mx-2 mt-2 flex overflow-hidden rounded-xl bg-[#154332]"
          : "mx-2 mt-2 flex overflow-hidden rounded-xl bg-[#1c2228]"
      }
    >
      <span className={sent ? "w-[9px] bg-[#a58ff8]" : "w-[9px] bg-[#21c063]"} />
      <span className="flex flex-col pt-[17px] pr-6 pb-4 pl-[17px] text-[24px] leading-[34px]">
        <span className={sent ? "font-medium text-[#d5d0f8]" : "font-medium text-[#b3ebc8]"}>{name}</span>
        <span className={sent ? "text-[#98b0a6]" : "text-[#8d9296]"}>{text}</span>
      </span>
    </blockquote>
  );
}

function Message({ sent, tail, quote, lines, time, gap }) {
  const multi = lines.length > 1;
  const side = sent ? "ml-auto bg-[#144d37]" : "mr-auto bg-[#1f272a]";
  const width = multi ? "w-[91%]" : "w-fit max-w-[91%]";
  const corners = tail ? (sent ? "rounded-3xl rounded-tr-none" : "rounded-3xl rounded-tl-none") : "rounded-3xl";
  const textPad = multi ? "pb-3" : quote ? "pb-[15px]" : "pb-[18px]";
  const pad = sent ? "pt-3 pr-[19px] pl-5" : "pt-3 pr-[17px] pl-[22px]";
  const metaPad = multi || quote ? "mb-[5px]" : sent ? "mb-2.5" : "mb-[7px]";
  return (
    <li className={`${gap} relative ${width} ${side} ${corners}`}>
      {tail && <Tail sent={sent} />}
      {quote && <Quote sent={sent} {...quote} />}
      <div className={`${pad} text-[28px] leading-[34px] text-[#f5f8f7]`}>
        {lines.slice(0, -1).map((line) => (
          <p key={line}>{line}</p>
        ))}
        <div className={sent ? "flex items-end justify-between gap-5" : "flex items-end justify-between gap-[30px]"}>
          <p className={textPad}>{lines[lines.length - 1]}</p>
          <div className={`flex shrink-0 items-center ${metaPad}`}>
            <time className={sent ? "text-[22px] leading-[26px] text-[#9fb9ad]" : "text-[22px] leading-[26px] text-[#a2a6a9]"}>
              {time}
            </time>
            {sent && <Ticks />}
          </div>
        </div>
      </div>
    </li>
  );
}

function ThumbsUp() {
  return (
    <svg className="h-7 w-7" viewBox="0 0 28 28" role="img" aria-label="Thumbs up">
      <path d="M1 14l6-1c3-1 5-4 6-7l1.500-5c2-1 4 .5 3.500 4l-1.500 7.500H25a2.200 2.200 0 0 1 1 4.200 2.200 2.200 0 0 1-.8 4 2.200 2.200 0 0 1-1.200 3.800c.3 1.700-.8 2.500-2 2.500h-8c-3 0-4-1.500-7-2l-6-.5z" fill="#d08a60" />
      <path d="M16.500 12.500q-2 2 0 4.200h9M17 16.700q-2 2 0 4h8M17.500 20.700q-1.500 2 0 3.800h6" fill="none" stroke="#9c5b3b" strokeWidth="1" />
    </svg>
  );
}

const MESSAGES = [
  { sent: true, tail: true, gap: "mt-[21px]", lines: ["He will pay the mototaxi?"], time: "6:03 PM" },
  { sent: true, gap: "mt-[3px]", lines: ["Or we don't have tip for him"], time: "6:03 PM" },
  { sent: true, gap: "mt-[3px]", lines: ["The remaining cash we had was his tip"], time: "6:03 PM" },
  { tail: true, gap: "mt-[22px]", lines: ["I hope the people from Solola don't closed the roads"], time: "6:03 PM" },
  { gap: "mt-[3px]", lines: ["Is not our fault"], time: "6:03 PM" },
  { gap: "mt-[3px]", lines: ["Its the catholic people"], time: "6:04 PM" },
  { gap: "mt-[3px]", lines: ["No"], time: "6:04 PM", quote: { name: "You", text: "He will pay the mototaxi?" } },
  {
    sent: true, tail: true, gap: "mt-[22px]", time: "6:04 PM",
    lines: ["The complete lack of communication is your fault. You could", "have said pick up at 5 or 4"],
  },
  {
    sent: true, gap: "mt-[6px]", time: "6:04 PM",
    quote: { name: "Authentic Guatemala", text: "No" },
    lines: ["Okay, there is no tip for the driver then. We have no cash", "remaining"],
  },
  { tail: true, gap: "mt-[22px]", lines: ["I said pick up 5 or 6pm"], time: "6:04 PM" },
  { sent: true, tail: true, gap: "mt-[21px]", lines: ["And we were not picked up"], time: "6:04 PM" },
  { tail: true, gap: "mt-[21px]", lines: ["Catholic traditions is the responsibility"], time: "6:04 PM" },
  { gap: "mt-[3px]", lines: ["They closed the roads"], time: "6:05 PM" },
  {
    sent: true, tail: true, gap: "mt-[21px]", time: "6:05 PM",
    lines: ["I'll look forward to discussing further when we arrive at the airport", "on time"],
  },
  { tail: true, gap: "mt-[22px]", lines: ["Is not our fault"], time: "6:05 PM" },
  { gap: "mt-[3px]", lines: ["Guatemala is the problem"], time: "6:05 PM" },
  {
    sent: true, tail: true, gap: "mt-[22px]", time: "6:05 PM",
    lines: ["The lack of communication on that and poor planning is your", "fault as a local business"],
  },
  { tail: true, gap: "mt-[22px]", lines: ["I said 5 to 6pm"], time: "6:05 PM" },
];

function Composer() {
  return (
    <form className="relative mt-[13px] flex items-center gap-[9px] pr-2 pb-[9px] pl-3" onSubmit={(e) => e.preventDefault()}>
      <div className="flex h-[100px] min-w-0 flex-1 items-center rounded-full bg-[#1f272a] pr-7 pl-[26px] text-[#8d9598]">
        <button type="button" aria-label="Emoji and stickers" className="shrink-0">
          <svg className="size-[43px]" viewBox="0 0 43 43" fill="none" stroke="currentColor" strokeWidth="3.800">
            <path d="M14 2h15q12 0 12 12v8L23 41h-9Q2 41 2 29V14Q2 2 14 2z" strokeLinejoin="round" />
            <path d="M24 40v-9q0-7 7-7h9" />
            <circle cx="14" cy="15" r="3.300" fill="currentColor" stroke="none" />
            <circle cx="29" cy="15" r="3.300" fill="currentColor" stroke="none" />
            <path d="M11 24h15q-2 4-2 8-10-1-13-8z" fill="currentColor" stroke="none" />
          </svg>
        </button>
        <input
          type="text"
          aria-label="Message"
          placeholder="Message"
          className="ml-[30px] min-w-0 flex-1 bg-transparent text-[32px] leading-10 text-white outline-none placeholder:text-[#8d9598]"
        />
        <button type="button" aria-label="Attach" className="shrink-0">
          <svg className="h-[43px] w-7" viewBox="0 0 28 43" fill="none" stroke="currentColor" strokeWidth="3.600" strokeLinecap="round">
            <path d="M26 10v19a12 12 0 0 1-24 0V11a8.500 8.500 0 0 1 17 0v17.500a5 5 0 0 1-9 0V11" />
          </svg>
        </button>
        <button type="button" aria-label="Camera" className="ml-[67px] shrink-0">
          <svg className="h-[39px] w-[43px]" viewBox="0 0 43 39" fill="none" stroke="currentColor" strokeWidth="4">
            <path d="M2.500 6.500h9.500l4-4h11l4 4h9.500v30h-38z" strokeLinejoin="round" />
            <circle cx="21.500" cy="21" r="7.800" />
          </svg>
        </button>
      </div>
      <button
        type="button"
        aria-label="Record voice message"
        className="flex size-[102px] shrink-0 items-center justify-center rounded-full bg-[#21c063] text-[#0b1014]"
      >
        <MdMic className="size-[52px]" />
      </button>
    </form>
  );
}

export default function App() {
  return (
    <div className="flex min-h-screen flex-col bg-[#0b1014] font-['Roboto',sans-serif]">
      <StatusBar />
      <Header />
      <main className="relative flex flex-1 flex-col overflow-hidden">
        <Wallpaper />
        <div className="absolute -top-9 left-[54px] flex size-[53px] items-end justify-center rounded-full bg-[#1f272a] pb-[11px]">
          <span className="size-[5px] rounded-full bg-white" />
        </div>
        <div className="absolute top-[7px] left-1/2 -translate-x-1/2 rounded-2xl bg-[#12181b] px-5 py-[11px] text-[22px] leading-[27px] font-medium whitespace-nowrap text-[#9a9fa2]">
          April 2, 2026
        </div>
        <ul className="relative flex flex-col px-9 pt-[30px]">
          <Message lines={["He is at the Texaco"]} time="6:03 PM" gap="mt-0" />
          <li className="relative -mt-[7px] ml-[18px]">
            <button
              type="button"
              aria-label="Reactions"
              className="flex size-[54px] items-center justify-center rounded-full border-2 border-[#0b1014] bg-[#1f272a]"
            >
              <ThumbsUp />
            </button>
          </li>
          {MESSAGES.map((m, i) => (
            <Message key={i} {...m} />
          ))}
        </ul>
        <Composer />
        <button
          type="button"
          aria-label="Scroll to latest"
          className="absolute right-[25px] bottom-[152px] flex size-[68px] items-center justify-center rounded-full bg-[#27323a]"
        >
          <svg className="h-7 w-6" viewBox="0 0 24 28" fill="none" stroke="#a4abaf" strokeWidth="3.600" strokeLinecap="round" strokeLinejoin="round" aria-hidden="true">
            <path d="M2 2l10 10L22 2M2 15l10 10 10-10" />
          </svg>
        </button>
      </main>
      <div className="flex justify-center pt-[21px] pb-[21px]">
        <div className="h-2 w-[228px] rounded-full bg-[#eceeee]" />
      </div>
    </div>
  );
}
